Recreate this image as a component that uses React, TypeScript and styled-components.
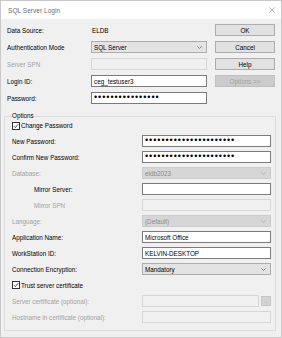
import React from "react";
import styled, { createGlobalStyle, css } from "styled-components";

const Global = createGlobalStyle`
  html, body { margin: 0; padding: 0; background: #f0f0f0; }
  body { font-family: "Liberation Sans", Arial, sans-serif; }
  * { box-sizing: border-box; }
`;

const FONT = "6.3px";

const Window = styled.div`
  position: relative;
  width: 282px;
  height: 338px;
  background: #f0f0f0;
  display: flex;
  flex-direction: column;
  overflow: hidden;
  box-shadow: inset 0 0 0 1px #c9c9c9;
`;

const TitleBar = styled.div`
  height: 19px;
  background: #ffffff;
  display: flex;
  align-items: center;
  justify-content: space-between;
  padding: 0 6px 0 7px;
  border: 1px solid #c9c9c9;
  border-bottom: none;
`;

const Title = styled.span`
  font-size: 6.6px;
  color: #6d6d6d;
`;

const Body = styled.div`
  display: flex;
  flex-direction: column;
  padding: 5px 6px 0 4px;
`;

const TopGrid = styled.div`
  display: grid;
  grid-template-columns: 84px 116px 8px 60px;
  grid-template-rows: repeat(5, 12px);
  row-gap: 5px;
  margin-left: 3px;
`;

const Label = styled.div<{ $row: number; $disabled?: boolean; $indent?: number }>`
  grid-row: ${(p) => p.$row};
  grid-column: 1;
  display: flex;
  align-items: center;
  font-size: ${FONT};
  color: ${(p) => (p.$disabled ? "#a2a2a2" : "#000")};
  padding-left: ${(p) => p.$indent ?? 0}px;
  white-space: nowrap;
`;

const Cell = styled.div<{ $row: number }>`
  grid-row: ${(p) => p.$row};
  grid-column: 2;
  display: flex;
  align-items: center;
  gap: 2px;
  min-width: 0;
`;

const PlainValue = styled.span`
  font-size: ${FONT};
  color: #000;
  padding-left: 1px;
`;

const boxBase = css`
  height: 12px;
  flex: 1;
  min-width: 0;
  display: flex;
  align-items: center;
  justify-content: flex-start;
  padding-left: 2px;
  font-size: ${FONT};
  white-space: nowrap;
  overflow: hidden;
`;

const TextBox = styled.div<{ $disabled?: boolean }>`
  ${boxBase};
  background: ${(p) => (p.$disabled ? "#f0f0f0" : "#ffffff")};
  border: 1px solid ${(p) => (p.$disabled ? "#d7d7d7" : "#7a7a7a")};
  color: #000;
`;

const Dots = styled.span`
  font-size: 9px;
  letter-spacing: 0.95px;
  line-height: 1;
  color: #000;
  margin-top: -1px;
`;

const Select = styled.div<{ $disabled?: boolean }>`
  ${boxBase};
  padding-right: 4px;
  background: ${(p) => (p.$disabled ? "#d6d6d6" : "#e3e3e3")};
  border: 1px solid ${(p) => (p.$disabled ? "#cbcbcb" : "#adadad")};
  color: ${(p) => (p.$disabled ? "#8a8a8a" : "#000")};
`;

const SelectText = styled.span`
  flex: 1;
  text-align: left;
`;

const Button = styled.div<{ $row: number; $disabled?: boolean }>`
  grid-row: ${(p) => p.$row};
  grid-column: 4;
  display: flex;
  align-items: center;
  justify-content: center;
  font-size: ${FONT};
  background: ${(p) => (p.$disabled ? "#cccccc" : "#e1e1e1")};
  border: 1px solid ${(p) => (p.$disabled ? "#bfbfbf" : "#adadad")};
  color: ${(p) => (p.$disabled ? "#a0a0a0" : "#000")};
`;

const Group = styled.fieldset`
  margin: 8px 0 0 0;
  width: 272px;
  border: 1px solid #dcdcdc;
  padding: 0 4px 7px 7px;
  min-width: 0;
`;

const Legend = styled.legend`
  padding: 0;
  font-size: ${FONT};
  line-height: 8px;
  color: #000;
`;

const GroupGrid = styled.div`
  display: grid;
  grid-template-columns: 130px 129px;
  grid-template-rows: 11px repeat(12, 12px);
  row-gap: 4px;
`;

const CheckRow = styled.div<{ $row: number }>`
  grid-row: ${(p) => p.$row};
  grid-column: 1 / span 2;
  display: flex;
  align-items: center;
  gap: 1px;
  font-size: ${FONT};
  color: #000;
`;

const CheckBox = styled.span`
  width: 8px;
  height: 8px;
  border: 1px solid #333333;
  background: #ffffff;
  display: flex;
  align-items: center;
  justify-content: center;
`;

const Browse = styled.div`
  flex: none;
  width: 10px;
  height: 10px;
  background: #d3d3d3;
  border: 1px solid #c6c6c6;
  display: flex;
  align-items: center;
  justify-content: center;
  font-size: 5px;
  line-height: 1;
  color: #9a9a9a;
`;

const Chevron = ({ muted }: { muted?: boolean }) => (
  <svg width="5" height="3" viewBox="0 0 5 3">
    <path d="M0.3 0.3 L2.5 2.5 L4.7 0.3" fill="none" stroke={muted ? "#a8a8a8" : "#606060"} strokeWidth="0.7" />
  </svg>
);

const Check = () => (
  <svg width="6" height="6" viewBox="0 0 6 6">
    <path d="M0.8 3.1 L2.3 4.6 L5.2 1.2" fill="none" stroke="#222" strokeWidth="0.8" />
  </svg>
);

const Close = () => (
  <svg width="6" height="6" viewBox="0 0 6 6">
    <path d="M0.3 0.3 L5.7 5.7 M5.7 0.3 L0.3 5.7" stroke="#8a8a8a" strokeWidth="0.6" />
  </svg>
);

const dots = (n: number) => "\u2022".repeat(n);

export default function App() {
  return (
    <>
      <Global />
      <Window>
        <TitleBar>
          <Title>SQL Server Login</Title>
          <Close />
        </TitleBar>
        <Body>
          <TopGrid>
            <Label $row={1}>Data Source:</Label>
            <Cell $row={1}>
              <PlainValue>ELDB</PlainValue>
            </Cell>
            <Button $row={1}>OK</Button>

            <Label $row={2}>Authentication Mode</Label>
            <Cell $row={2}>
              <Select>
                <SelectText>SQL Server</SelectText>
                <Chevron />
              </Select>
            </Cell>
            <Button $row={2}>Cancel</Button>

            <Label $row={3} $disabled>Server SPN</Label>
            <Cell $row={3}>
              <TextBox $disabled />
            </Cell>
            <Button $row={3}>Help</Button>

            <Label $row={4}>Login ID:</Label>
            <Cell $row={4}>
              <TextBox>ceg_testuser3</TextBox>
            </Cell>
            <Button $row={4} $disabled>Options &gt;&gt;</Button>

            <Label $row={5}>Password:</Label>
            <Cell $row={5}>
              <TextBox>
                <Dots>{dots(16)}</Dots>
              </TextBox>
            </Cell>
          </TopGrid>

          <Group>
            <Legend>Options</Legend>
            <GroupGrid>
              <CheckRow $row={1}>
                <CheckBox>
                  <Check />
                </CheckBox>
                Change Password
              </CheckRow>

              <Label $row={2}>New Password:</Label>
              <Cell $row={2}>
                <TextBox>
                  <Dots>{dots(22)}</Dots>
                </TextBox>
              </Cell>

              <Label $row={3}>Confirm New Password:</Label>
              <Cell $row={3}>
                <TextBox>
                  <Dots>{dots(22)}</Dots>
                </TextBox>
              </Cell>

              <Label $row={4} $disabled>Database:</Label>
              <Cell $row={4}>
                <Select $disabled>
                  <SelectText>eldb2023</SelectText>
                  <Chevron muted />
                </Select>
              </Cell>

              <Label $row={5} $indent={22}>Mirror Server:</Label>
              <Cell $row={5}>
                <TextBox />
              </Cell>

              <Label $row={6} $indent={22} $disabled>Mirror SPN</Label>
              <Cell $row={6}>
                <TextBox $disabled />
              </Cell>

              <Label $row={7} $disabled>Language:</Label>
              <Cell $row={7}>
                <Select $disabled>
                  <SelectText>(Default)</SelectText>
                  <Chevron muted />
                </Select>
              </Cell>

              <Label $row={8}>Application Name:</Label>
              <Cell $row={8}>
                <TextBox>Microsoft Office</TextBox>
              </Cell>

              <Label $row={9}>WorkStation ID:</Label>
              <Cell $row={9}>
                <TextBox>KELVIN-DESKTOP</TextBox>
              </Cell>

              <Label $row={10}>Connection Encryption:</Label>
              <Cell $row={10}>
                <Select>
                  <SelectText>Mandatory</SelectText>
                  <Chevron />
                </Select>
              </Cell>

              <CheckRow $row={11}>
                <CheckBox>
                  <Check />
                </CheckBox>
                Trust server certificate
              </CheckRow>

              <Label $row={12} $disabled>Server certificate (optional):</Label>
              <Cell $row={12}>
                <TextBox $disabled />
                <Browse>...</Browse>
              </Cell>

              <Label $row={13} $disabled>Hostname in certificate (optional):</Label>
              <Cell $row={13}>
                <TextBox $disabled />
              </Cell>
            </GroupGrid>
          </Group>
        </Body>
      </Window>
    </>
  );
}
